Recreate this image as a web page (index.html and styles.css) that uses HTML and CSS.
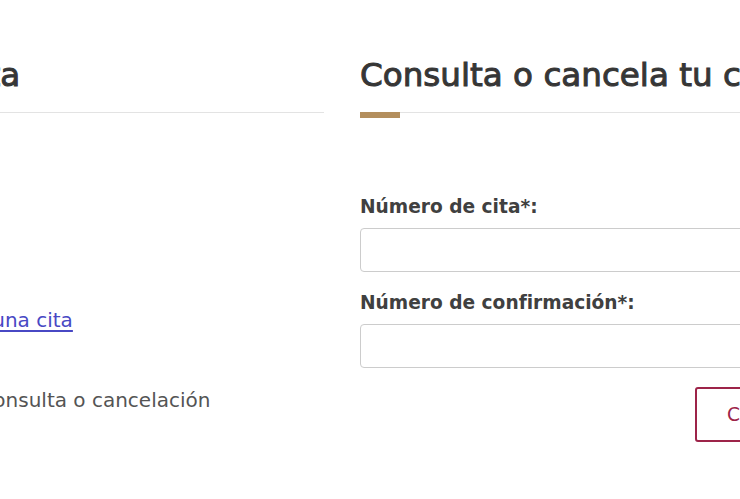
FILE: index.html
```html
<!DOCTYPE html>
<html lang="es">
<head>
<meta charset="utf-8">
<title>Citas</title>
<link rel="stylesheet" href="styles.css">
</head>
<body>
<main class="page">
  <section class="col col-left">
    <h2 class="title">Agenda tu cita</h2>
    <div class="rule"></div>
    <p class="link-row"><a href="#" class="link">Da clic para solicitar una cita</a></p>
    <p class="note">Ir a la sección de la consulta o cancelación</p>
  </section>
  <section class="col col-right">
    <h2 class="title">Consulta o cancela tu cita</h2>
    <div class="rule"></div>
    <form class="form">
      <label class="label" for="cita">Número de cita*:</label>
      <input class="input" id="cita" type="text">
      <label class="label label-second" for="conf">Número de confirmación*:</label>
      <input class="input" id="conf" type="text">
      <div class="actions">
        <button type="button" class="btn">Consultar</button>
      </div>
    </form>
  </section>
</main>
</body>
</html>
```
FILE: styles.css
```css
html, body {
  margin: 0;
  padding: 0;
  background: #ffffff;
  overflow: hidden;
}
body {
  font-family: "DejaVu Sans", "Liberation Sans", sans-serif;
  font-size: 20px;
  color: #545454;
  width: 740px;
  height: 499px;
}
.page {
  display: flex;
  gap: 36px;
  margin-left: -218px;
  padding-top: 55px;
}
.col {
  min-width: 0;
}
.col-left {
  flex: 0 0 542px;
}
.col-right {
  flex: 0 0 488px;
}
.title {
  margin: 0;
  font-size: 32.6px;
  line-height: 40px;
  font-weight: normal;
  color: #363636;
  -webkit-text-stroke: 1px #363636;
  white-space: nowrap;
}
.rule {
  margin-top: 17px;
  height: 1px;
  background: #e3e3e3;
}
.col-right .rule {
  width: 700px;
}
.rule::before {
  content: "";
  display: block;
  width: 40px;
  height: 6px;
  background: #b38e5d;
}
.link-row {
  margin: 192px 0 0;
  line-height: 30px;
  white-space: nowrap;
}
.link {
  color: #4848c4;
  text-decoration: underline;
  text-underline-offset: 3px;
}
.note {
  margin: 50px 0 0;
  line-height: 30px;
  white-space: nowrap;
}
.form {
  display: flex;
  flex-direction: column;
  margin-top: 82px;
}
.label {
  font-size: 18.6px;
  line-height: 24px;
  font-weight: bold;
  color: #404040;
  white-space: nowrap;
}
.label-second {
  margin-top: 19px;
}
.input {
  margin-top: 9px;
  width: 600px;
  height: 44px;
  box-sizing: border-box;
  border: 1px solid #cccccc;
  border-radius: 4px;
  background: #fff;
}
.actions {
  display: flex;
  justify-content: flex-end;
  margin-top: 19px;
}
.btn {
  height: 55px;
  padding: 0 30px;
  border: 2px solid #9d2449;
  border-radius: 3px;
  background: #fff;
  color: #9d2449;
  font-family: "DejaVu Sans", "Liberation Sans", sans-serif;
  font-size: 18.6px;
  white-space: nowrap;
}
```
